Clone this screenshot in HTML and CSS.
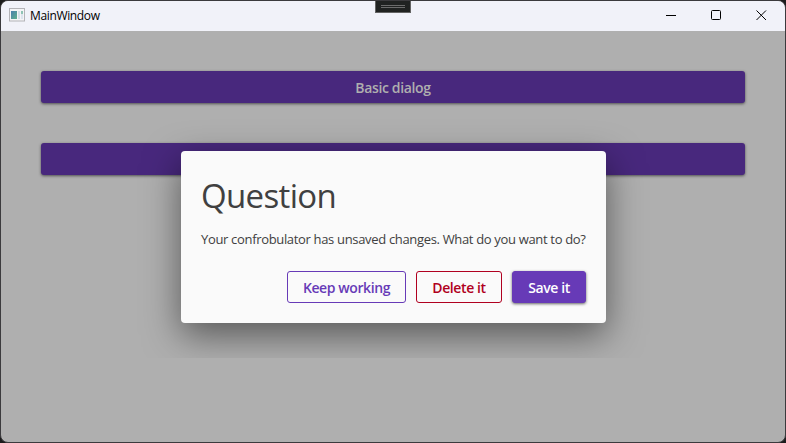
FILE: index.html
```
<!DOCTYPE html>
<html lang="en">
<head>
<meta charset="utf-8">
<title>MainWindow</title>
<link rel="stylesheet" href="styles.css">
</head>
<body>
<div class="window">
  <header class="titlebar">
    <svg class="app-icon" width="16" height="14" viewBox="0 0 16 14">
      <defs><linearGradient id="pane" x1="0" y1="0" x2="1" y2="1"><stop offset="0" stop-color="#4a7fae"/><stop offset="1" stop-color="#5fb08c"/></linearGradient></defs>
      <rect x=".5" y=".5" width="15" height="12.5" fill="#f4f4f6" stroke="#b4b4b8"/>
      <rect x="2" y="3" width="6" height="8" fill="url(#pane)"/>
      <rect x="9" y="3" width="2" height="8" fill="#d5dfe8"/>
      <rect x="12" y="3" width="2" height="3" fill="#8fc3b4"/>
      <rect x="12" y="6" width="2" height="5" fill="#dde4ee"/>
    </svg>
    <span class="title">MainWindow</span>
    <div class="controls">
      <svg width="11" height="11" viewBox="0 0 11 11"><path d="M0 5.5H10"/></svg>
      <svg width="11" height="11" viewBox="0 0 11 11"><rect x=".5" y=".5" width="9" height="9" rx="1"/></svg>
      <svg width="11" height="11" viewBox="0 0 11 11"><path d="M.5 .5L10 10M10 .5L.5 10"/></svg>
    </div>
  </header>
  <main class="content">
    <button class="wide"><span class="wide-label">Basic dialog</span></button>
    <button class="wide" aria-label="Question dialog"></button>
  </main>
  <div class="overlay">
    <section class="dialog" role="dialog">
      <h1 class="heading"><span>Question</span></h1>
      <p class="message"><span class="message-text">Your confrobulator has unsaved changes. What do you want to do?</span></p>
      <div class="actions">
        <button class="action keep"><span>Keep working</span></button>
        <button class="action delete"><span>Delete it</span></button>
        <button class="action save"><span>Save it</span></button>
      </div>
    </section>
  </div>
  <div class="debug-tab"></div>
</div>
</body>
</html>
```
FILE: styles.css
```
* { box-sizing: border-box; }
body { margin: 0; background: #1c1c1c; font-family: "Open Sans", "Noto Sans", sans-serif; }
button { font: inherit; border: 0; padding: 0; margin: 0; }
.window {
  position: relative; width: 786px; height: 443px; overflow: hidden;
  display: flex; flex-direction: column;
  border: 1px solid #3b3a3d; border-radius: 8px; background: #afafaf;
}
.titlebar {
  flex: none; height: 30px; display: flex; align-items: center;
  padding-left: 8px; background: #f1f2f9;
}
.app-icon { margin-top: -2px; }
.title { margin-left: 5px; font-size: 12px; line-height: 16px; color: #000; letter-spacing: -0.35px; white-space: nowrap; }
.controls { margin-left: auto; display: flex; gap: 34px; padding: 0 18px 2px 0; }
.controls svg { fill: none; stroke: #000; stroke-width: 1; }
.content { flex: 1; display: flex; flex-direction: column; gap: 40px; padding: 40px; }
.wide {
  height: 32px; width: 704px; border-radius: 3px; background: #48287d; color: #afafaf;
  font-size: 14px; font-weight: 600; line-height: 32px; padding-top: 1px;
  box-shadow: 0 1px 3px rgba(0,0,0,.55);
}
.wide-label { letter-spacing: -0.35px; }
.overlay {
  position: absolute; inset: 30px 0 0 0; padding: 120px 180px 0;
  clip-path: inset(0 0 84px 0);
}
.dialog {
  width: 425px; height: 172px; padding: 20px; border-radius: 4px;
  display: flex; flex-direction: column; background: #fafafa; color: #404040;
  box-shadow: 0 12px 36px rgba(0,0,0,.5);
}
.heading { margin: 0; height: 50px; font-size: 33px; font-weight: 400; line-height: 50px; letter-spacing: -0.65px; white-space: nowrap; }
.message { margin: 9px 0 0; height: 18px; font-size: 13px; line-height: 18px; white-space: nowrap; }
.message-text { letter-spacing: -0.33px; }
.actions { margin-top: 23px; display: flex; justify-content: flex-end; gap: 10px; }
.action { height: 32px; border-radius: 3px; font-size: 14px; font-weight: 600; line-height: 29px; padding-top: 1px; letter-spacing: -0.4px; white-space: nowrap; border: 1px solid; background: transparent; }
.keep { width: 119px; color: #673ab7; }
.delete { width: 86px; color: #b00020; }
.save { width: 74px; color: #fff; background: #673ab7; border-color: #673ab7; box-shadow: 0 1px 3px rgba(0,0,0,.6); }
.debug-tab {
  position: absolute; left: 374px; top: -1px; width: 36px; height: 13px;
  border: 1px solid #636363; border-top-color: #3b3a3d; background:
    linear-gradient(#6b6b6b,#6b6b6b) 5px 4px / 24px 1px no-repeat,
    linear-gradient(#6b6b6b,#6b6b6b) 5px 6px / 24px 1px no-repeat, #202221;
}
```
